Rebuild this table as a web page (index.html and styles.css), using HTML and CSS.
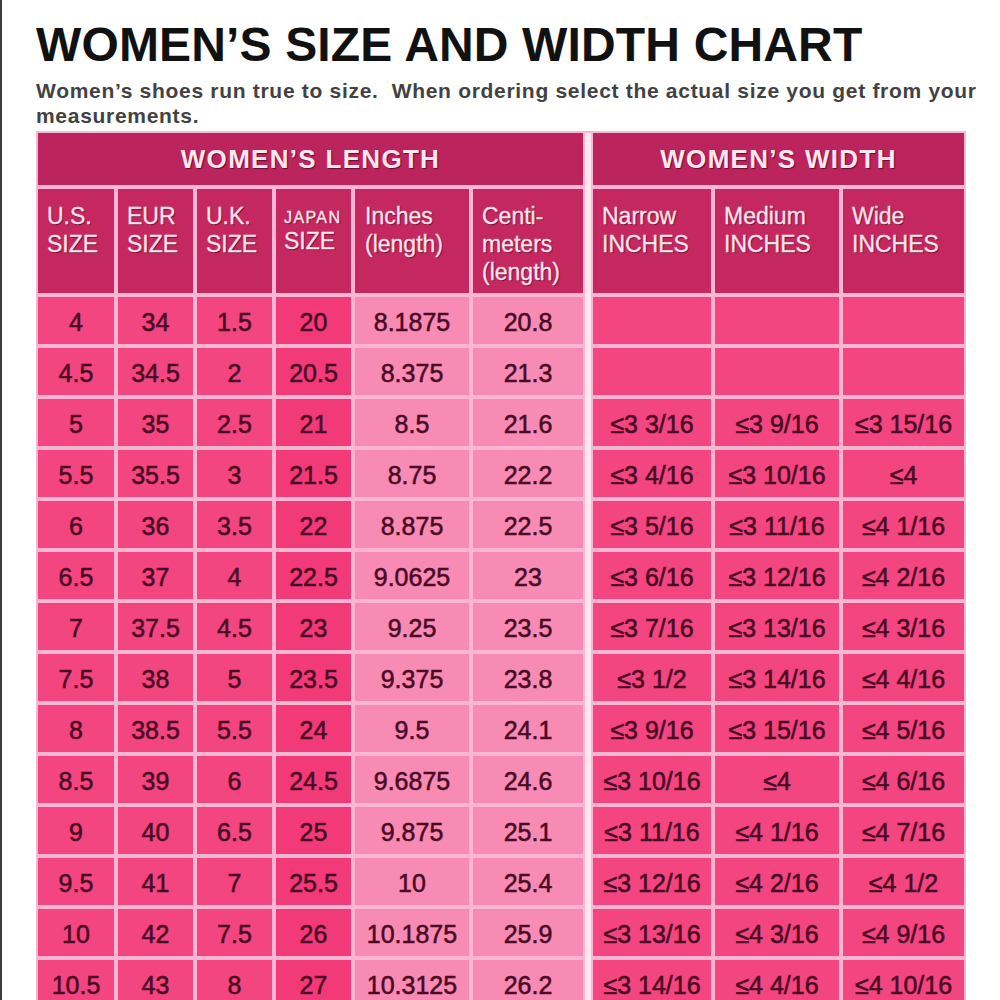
FILE: index.html
```html
<!DOCTYPE html>
<html lang="en">
<head>
<meta charset="utf-8">
<title>Women's Size and Width Chart</title>
<link rel="stylesheet" href="styles.css">
</head>
<body>
<div class="page">
  <h1 class="title">WOMEN’S SIZE AND WIDTH CHART</h1>
  <p class="intro">Women’s shoes run true to size.&nbsp; When ordering select the actual size you get from your measurements.</p>

  <div class="chart">
    <div class="panel panel-length">
      <div class="cap cap-6">WOMEN’S LENGTH</div>
      <div class="hd">U.S.<br>SIZE</div>
      <div class="hd">EUR<br>SIZE</div>
      <div class="hd">U.K.<br>SIZE</div>
      <div class="hd hd-jp"><span class="jp">JAPAN</span><br>SIZE</div>
      <div class="hd hd-in">Inches<br>(length)</div>
      <div class="hd">Centi-<br>meters<br>(length)</div>

      <div class="c">4</div><div class="c">34</div><div class="c">1.5</div><div class="c jp-c">20</div><div class="c lt">8.1875</div><div class="c lt">20.8</div>
      <div class="c">4.5</div><div class="c">34.5</div><div class="c">2</div><div class="c jp-c">20.5</div><div class="c lt">8.375</div><div class="c lt">21.3</div>
      <div class="c">5</div><div class="c">35</div><div class="c">2.5</div><div class="c jp-c">21</div><div class="c lt">8.5</div><div class="c lt">21.6</div>
      <div class="c">5.5</div><div class="c">35.5</div><div class="c">3</div><div class="c jp-c">21.5</div><div class="c lt">8.75</div><div class="c lt">22.2</div>
      <div class="c">6</div><div class="c">36</div><div class="c">3.5</div><div class="c jp-c">22</div><div class="c lt">8.875</div><div class="c lt">22.5</div>
      <div class="c">6.5</div><div class="c">37</div><div class="c">4</div><div class="c jp-c">22.5</div><div class="c lt">9.0625</div><div class="c lt">23</div>
      <div class="c">7</div><div class="c">37.5</div><div class="c">4.5</div><div class="c jp-c">23</div><div class="c lt">9.25</div><div class="c lt">23.5</div>
      <div class="c">7.5</div><div class="c">38</div><div class="c">5</div><div class="c jp-c">23.5</div><div class="c lt">9.375</div><div class="c lt">23.8</div>
      <div class="c">8</div><div class="c">38.5</div><div class="c">5.5</div><div class="c jp-c">24</div><div class="c lt">9.5</div><div class="c lt">24.1</div>
      <div class="c">8.5</div><div class="c">39</div><div class="c">6</div><div class="c jp-c">24.5</div><div class="c lt">9.6875</div><div class="c lt">24.6</div>
      <div class="c">9</div><div class="c">40</div><div class="c">6.5</div><div class="c jp-c">25</div><div class="c lt">9.875</div><div class="c lt">25.1</div>
      <div class="c">9.5</div><div class="c">41</div><div class="c">7</div><div class="c jp-c">25.5</div><div class="c lt">10</div><div class="c lt">25.4</div>
      <div class="c">10</div><div class="c">42</div><div class="c">7.5</div><div class="c jp-c">26</div><div class="c lt">10.1875</div><div class="c lt">25.9</div>
      <div class="c">10.5</div><div class="c">43</div><div class="c">8</div><div class="c jp-c">27</div><div class="c lt">10.3125</div><div class="c lt">26.2</div>
    </div>

    <div class="sep"></div>

    <div class="panel panel-width">
      <div class="cap cap-3">WOMEN’S WIDTH</div>
      <div class="hd">Narrow<br>INCHES</div>
      <div class="hd">Medium<br>INCHES</div>
      <div class="hd">Wide<br>INCHES</div>

      <div class="c"></div><div class="c"></div><div class="c"></div>
      <div class="c"></div><div class="c"></div><div class="c"></div>
      <div class="c">≤3 3/16</div><div class="c">≤3 9/16</div><div class="c">≤3 15/16</div>
      <div class="c">≤3 4/16</div><div class="c">≤3 10/16</div><div class="c">≤4</div>
      <div class="c">≤3 5/16</div><div class="c">≤3 11/16</div><div class="c">≤4 1/16</div>
      <div class="c">≤3 6/16</div><div class="c">≤3 12/16</div><div class="c">≤4 2/16</div>
      <div class="c">≤3 7/16</div><div class="c">≤3 13/16</div><div class="c">≤4 3/16</div>
      <div class="c">≤3 1/2</div><div class="c">≤3 14/16</div><div class="c">≤4 4/16</div>
      <div class="c">≤3 9/16</div><div class="c">≤3 15/16</div><div class="c">≤4 5/16</div>
      <div class="c">≤3 10/16</div><div class="c">≤4</div><div class="c">≤4 6/16</div>
      <div class="c">≤3 11/16</div><div class="c">≤4 1/16</div><div class="c">≤4 7/16</div>
      <div class="c">≤3 12/16</div><div class="c">≤4 2/16</div><div class="c">≤4 1/2</div>
      <div class="c">≤3 13/16</div><div class="c">≤4 3/16</div><div class="c">≤4 9/16</div>
      <div class="c">≤3 14/16</div><div class="c">≤4 4/16</div><div class="c">≤4 10/16</div>
    </div>
  </div>
</div>
</body>
</html>
```

FILE: styles.css
```css
html, body {
  margin: 0;
  padding: 0;
  background: #ffffff;
  overflow: hidden;
}

.page {
  width: 1000px;
  height: 1000px;
  box-sizing: border-box;
  border-left: 2px solid #3c3c3c;
  padding: 21px 0 0 34px;
  font-family: "Liberation Sans", Arial, sans-serif;
}

.title {
  margin: 0;
  font-size: 48px;
  line-height: 48px;
  font-weight: 700;
  color: #111111;
  letter-spacing: 0.15px;
}

.intro {
  margin: 9px 0 0 0;
  width: 955px;
  font-size: 21px;
  line-height: 25px;
  font-weight: 700;
  letter-spacing: 0.7px;
  color: #424242;
}

.chart {
  margin-top: 3px;
  display: inline-flex;
  padding: 2px;
  background: #fab6d2;
}

.sep {
  width: 6px;
  margin: 0 2px;
  background: #fde6f0;
}

.panel {
  display: grid;
  gap: 4px;
  grid-template-rows: 52px 104px repeat(14, 47px);
}

.panel-length {
  grid-template-columns: 76px 75px 75px 75px 114px 110px;
}

.panel-width {
  grid-template-columns: 118px 124px 121px;
}

.cap {
  background: #bc245d;
  color: #fde7ef;
  font-weight: 700;
  font-size: 26px;
  letter-spacing: 1.3px;
  display: flex;
  align-items: center;
  justify-content: center;
  text-shadow: 1px 1px 1px rgba(70, 0, 25, 0.7);
}

.cap-6 { grid-column: 1 / span 6; }
.cap-3 { grid-column: 1 / span 3; }

.hd {
  background: #c4285f;
  color: #fde4ee;
  font-size: 23px;
  line-height: 28px;
  padding: 13px 6px 0 9px;
  text-shadow: 1px 1px 1px rgba(70, 0, 25, 0.65);
  -webkit-text-stroke: 0.3px #fde4ee;
  white-space: nowrap;
}

.hd-jp {
  padding-left: 8px;
  line-height: 26px;
}

.jp {
  font-size: 16px;
  letter-spacing: 1.4px;
  line-height: 16px;
  -webkit-text-stroke: 0.4px #fde4ee;
}

.hd-in {
  padding-left: 10px;
}

.c {
  background: #f3457f;
  color: #4a0a24;
  font-size: 25px;
  -webkit-text-stroke: 0.55px #4a0a24;
  display: flex;
  align-items: center;
  justify-content: center;
  padding-top: 3px;
  box-sizing: border-box;
}

.jp-c {
  background: #f23a79;
}

.lt {
  background: #f78bb3;
}
```
